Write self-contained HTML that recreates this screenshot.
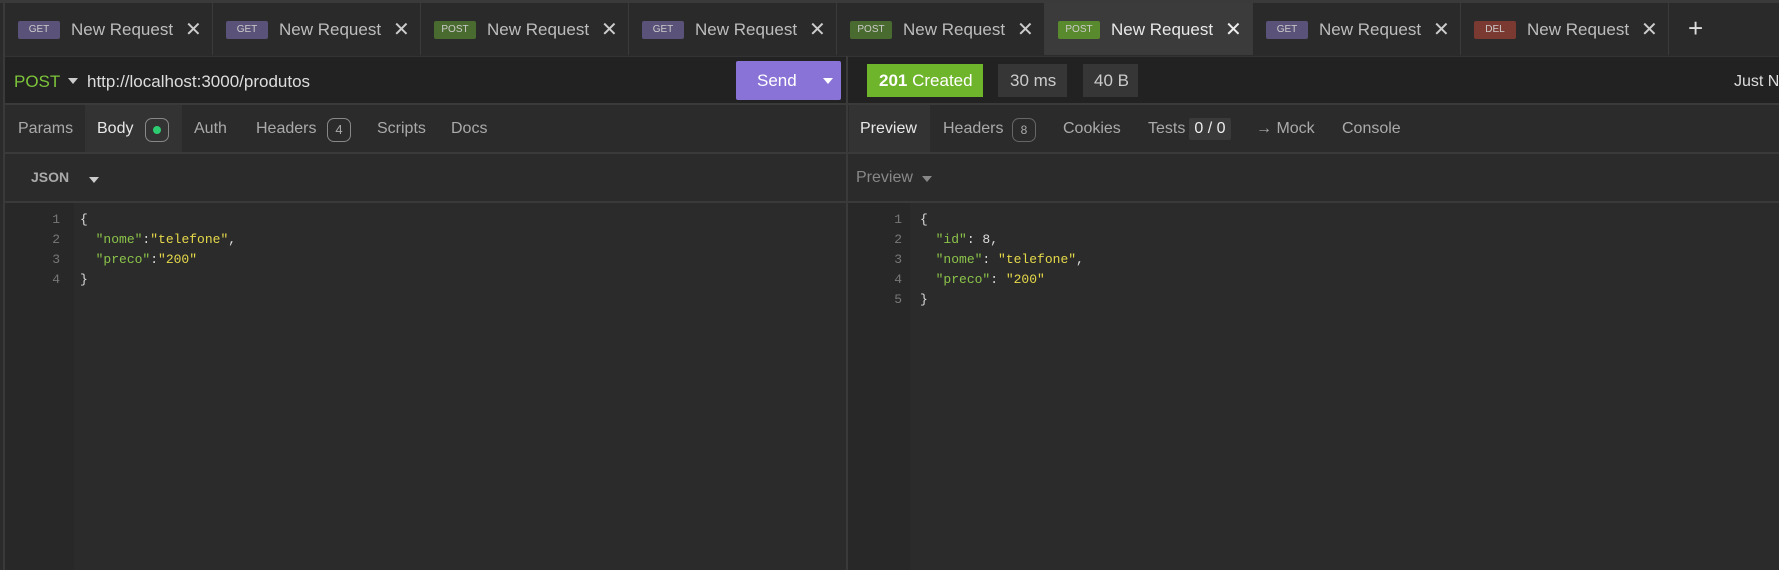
<!DOCTYPE html>
<html><head><style>
*{margin:0;padding:0;box-sizing:border-box}
body{width:1779px;height:570px;background:#2b2b2b;font-family:"Liberation Sans",sans-serif;position:relative;overflow:hidden;color:#bbb}
.a{position:absolute;white-space:nowrap}
.tab{position:absolute;top:3px;height:52px;width:208px;border-right:1px solid #3a3a3a;background:#2a2a2a}
.tab .b{position:absolute;left:13px;top:18px;width:42px;height:18px;border-radius:2px;font-size:10px;color:#ccc;text-align:center;line-height:18px}
.tab .t{position:absolute;left:66px;top:17px;font-size:17px;color:#bdbdbd;white-space:nowrap}
.tab .x{position:absolute;left:180px;top:14px;font-size:20px;color:#ccc}
.get{background:#5a5279}.post{background:#4a6b2f}.del{background:#7a3a32}
.mono{font-family:"Liberation Mono",monospace;font-size:13px}
.ln{position:absolute;color:#777;text-align:right;width:20px}
.k{color:#8bc34a}.s{color:#e6d94a}.p{color:#ddd}
.st{position:absolute;font-size:16px;color:#aaa;top:120px;white-space:nowrap}
</style></head><body>
<div class="a" style="left:0;top:0;width:1779px;height:3px;background:#3a3a3a"></div>
<div class="a" style="left:0;top:3px;width:1779px;height:52px;background:#2a2a2a"></div>
<div class="a" style="left:3px;top:0;width:2px;height:570px;background:#3a3a3a"></div>
<div class="tab" style="left:5px"><div class="b get">GET</div><div class="t">New Request</div><div class="x">✕</div></div>
<div class="tab" style="left:213px"><div class="b get">GET</div><div class="t">New Request</div><div class="x">✕</div></div>
<div class="tab" style="left:421px"><div class="b post">POST</div><div class="t">New Request</div><div class="x">✕</div></div>
<div class="tab" style="left:629px"><div class="b get">GET</div><div class="t">New Request</div><div class="x">✕</div></div>
<div class="tab" style="left:837px"><div class="b post">POST</div><div class="t">New Request</div><div class="x">✕</div></div>
<div class="tab" style="left:1045px;background:#3b3b3b"><div class="b post" style="background:#5a8a2e">POST</div><div class="t" style="color:#e8e8e8">New Request</div><div class="x" style="color:#eee">✕</div></div>
<div class="tab" style="left:1253px"><div class="b get">GET</div><div class="t">New Request</div><div class="x">✕</div></div>
<div class="tab" style="left:1461px"><div class="b del">DEL</div><div class="t">New Request</div><div class="x">✕</div></div>
<div class="a" style="left:1688px;top:13px;font-size:26px;color:#ddd">+</div>
<div class="a" style="left:5px;top:56px;width:1774px;height:49px;background:#222;border-top:1px solid #333;border-bottom:2px solid #3a3a3a"></div>
<div class="a" style="left:14px;top:72px;font-size:17px;color:#7cc43a">POST</div>
<div class="a" style="left:68px;top:78px;width:0;height:0;border-left:5px solid transparent;border-right:5px solid transparent;border-top:6px solid #ccc"></div>
<div class="a" style="left:87px;top:72px;font-size:17px;color:#ddd">http://localhost:3000/produtos</div>
<div class="a" style="left:736px;top:61px;width:105px;height:39px;background:#8a73d6;border-radius:2px"></div>
<div class="a" style="left:757px;top:71px;font-size:17px;color:#fff">Send</div>
<div class="a" style="left:823px;top:78px;width:0;height:0;border-left:5px solid transparent;border-right:5px solid transparent;border-top:6px solid #fff"></div>
<div class="a" style="left:846px;top:56px;width:2px;height:514px;background:#3a3a3a"></div>
<div class="a" style="left:867px;top:64px;width:116px;height:33px;background:#6fb52c"></div>
<div class="a" style="left:879px;top:71px;font-size:17px;color:#fff"><b>201</b> Created</div>
<div class="a" style="left:998px;top:64px;width:69px;height:33px;background:#363636"></div>
<div class="a" style="left:1010px;top:71px;font-size:17px;color:#ccc">30 ms</div>
<div class="a" style="left:1083px;top:64px;width:55px;height:33px;background:#363636"></div>
<div class="a" style="left:1094px;top:71px;font-size:17px;color:#ccc">40 B</div>
<div class="a" style="left:1734px;top:73px;font-size:16px;color:#ddd">Just No</div>
<div class="a" style="left:85px;top:105px;width:97px;height:48px;background:#333"></div>
<div class="a" style="left:849px;top:105px;width:81px;height:48px;background:#333"></div>
<div class="a" style="left:5px;top:152px;width:1774px;height:2px;background:#3a3a3a"></div>
<div class="st" style="left:18px">Params</div>
<div class="st" style="left:97px;color:#e8e8e8">Body</div>
<div class="a" style="left:145px;top:118px;width:24px;height:24px;border:1px solid #888;border-radius:7px"></div>
<div class="a" style="left:153px;top:126px;width:8px;height:8px;border-radius:50%;background:#2ecc71"></div>
<div class="st" style="left:194px">Auth</div>
<div class="st" style="left:256px">Headers</div>
<div class="a" style="left:327px;top:118px;width:24px;height:24px;border:1px solid #888;border-radius:7px;font-size:13px;text-align:center;line-height:22px;color:#aaa">4</div>
<div class="st" style="left:377px">Scripts</div>
<div class="st" style="left:451px">Docs</div>
<div class="st" style="left:860px;color:#e8e8e8">Preview</div>
<div class="st" style="left:943px">Headers</div>
<div class="a" style="left:1012px;top:118px;width:24px;height:24px;border:1px solid #666;border-radius:7px;font-size:12px;text-align:center;line-height:22px;color:#aaa">8</div>
<div class="st" style="left:1063px">Cookies</div>
<div class="st" style="left:1148px">Tests</div>
<div class="a" style="left:1189px;top:118px;width:42px;height:22px;background:#3a3a3a;border-radius:2px;font-size:16px;color:#eee;text-align:center;line-height:22px">0 / 0</div>
<div class="st" style="left:1256px">→ Mock</div>
<div class="st" style="left:1342px">Console</div>
<div class="a" style="left:5px;top:201px;width:1774px;height:2px;background:#3a3a3a"></div>
<div class="a" style="left:31px;top:169px;font-size:14px;font-weight:bold;color:#aaa">JSON</div>
<div class="a" style="left:89px;top:177px;width:0;height:0;border-left:5px solid transparent;border-right:5px solid transparent;border-top:6px solid #ccc"></div>
<div class="a" style="left:856px;top:169px;font-size:16px;color:#888">Preview</div>
<div class="a" style="left:922px;top:176px;width:0;height:0;border-left:5px solid transparent;border-right:5px solid transparent;border-top:6px solid #888"></div>
<div class="a" style="left:5px;top:203px;width:69px;height:367px;background:#282828"></div>
<div class="a" style="left:848px;top:203px;width:62px;height:367px;background:#282828"></div>
<div class="mono">
<div class="ln" style="left:40px;top:210px;line-height:20px">1<br>2<br>3<br>4</div>
<div class="a p" style="left:80px;top:210px;line-height:20px;white-space:pre">{
  <span class="k">"nome"</span>:<span class="s">"telefone"</span>,
  <span class="k">"preco"</span>:<span class="s">"200"</span>
}</div>
<div class="ln" style="left:882px;top:210px;line-height:20px">1<br>2<br>3<br>4<br>5</div>
<div class="a p" style="left:920px;top:210px;line-height:20px;white-space:pre">{
  <span class="k">"id"</span>: 8,
  <span class="k">"nome"</span>: <span class="s">"telefone"</span>,
  <span class="k">"preco"</span>: <span class="s">"200"</span>
}</div>
</div>
</body></html>
